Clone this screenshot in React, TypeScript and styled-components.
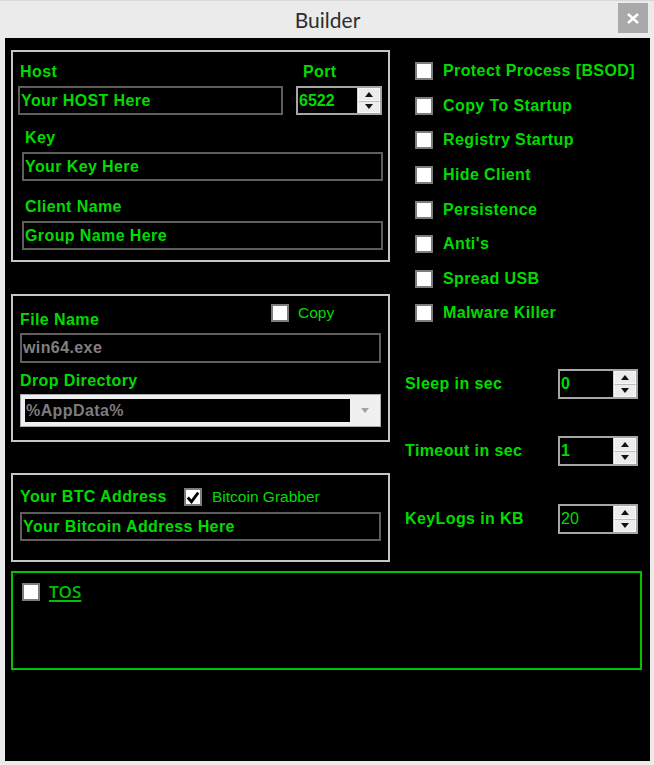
import styled, { createGlobalStyle } from "styled-components";

const GREEN = "#00dc00";
const DARK_GREEN = "#00c300";
const FONT = `"Liberation Sans", Arial, sans-serif`;

const GlobalStyle = createGlobalStyle`
  html, body {
    margin: 0;
    padding: 0;
    background: #ebebeb;
  }
  body {
    width: 654px;
    height: 765px;
    overflow: hidden;
    font-family: ${FONT};
  }
  * {
    box-sizing: border-box;
  }
`;

const optionsList = [
  "Protect Process [BSOD]",
  "Copy To Startup",
  "Registry Startup",
  "Hide Client",
  "Persistence",
  "Anti's",
  "Spread USB",
  "Malware Killer",
];

const numericList = [
  { label: "Sleep in sec", value: "0", bold: true },
  { label: "Timeout in sec", value: "1", bold: true },
  { label: "KeyLogs in KB", value: "20", bold: false },
];

function CheckBox({ checked = false }: { checked?: boolean }) {
  return (
    <St.Box>
      {checked && (
        <svg width="15" height="15" viewBox="0 0 14 14">
          <polyline points="1.8,7 5.5,11.2 12.2,2.2" fill="none" stroke="#000" strokeWidth="2.8" />
        </svg>
      )}
    </St.Box>
  );
}

function Spinner() {
  return (
    <St.Spinner>
      <St.SpinHalf>
        <svg width="8" height="5" viewBox="0 0 8 5">
          <polygon points="0,5 8,5 4,0" fill="#111" />
        </svg>
      </St.SpinHalf>
      <St.SpinHalf $bottom>
        <svg width="8" height="5" viewBox="0 0 8 5">
          <polygon points="0,0 8,0 4,5" fill="#111" />
        </svg>
      </St.SpinHalf>
    </St.Spinner>
  );
}

function NumericBox({ value, width, height, bold = true }: { value: string; width: number; height: number; bold?: boolean }) {
  return (
    <St.Numeric $w={width} $h={height}>
      <St.NumValue $bold={bold}>{value}</St.NumValue>
      <Spinner />
    </St.Numeric>
  );
}

export default function App() {
  return (
    <>
      <GlobalStyle />
      <St.Window>
        <St.TitleBar>
          <span />
          <St.Title>Builder</St.Title>
          <St.CloseBtn type="button" aria-label="close">
            <svg width="12" height="11" viewBox="0 0 12 11">
              <path d="M1 1 L11 10 M11 1 L1 10" stroke="#fff" strokeWidth="2.4" />
            </svg>
          </St.CloseBtn>
        </St.TitleBar>

        <St.Panel>
          <St.LeftCol>
            {/* connection settings */}
            <St.Group $pb={10} $mb={32}>
              <St.HostGrid>
                <St.Label $indent={2}>Host</St.Label>
                <St.Label $indent={7}>Port</St.Label>
                <St.TextBox $h={29} defaultValue="Your HOST Here" readOnly />
                <NumericBox value="6522" width={86} height={29} />
              </St.HostGrid>
              <St.Field $mt={14} $ml={9}>
                <St.Label $indent={3}>Key</St.Label>
                <St.TextBox $h={29} defaultValue="Your Key Here" readOnly />
              </St.Field>
              <St.Field $mt={17} $ml={9}>
                <St.Label $indent={3}>Client Name</St.Label>
                <St.TextBox $h={29} defaultValue="Group Name Here" readOnly />
              </St.Field>
            </St.Group>

            {/* install settings */}
            <St.Group $pb={13} $mb={31}>
              <St.FileHeader>
                <St.Label>File Name</St.Label>
                <St.CheckLine $gap={9}>
                  <CheckBox />
                  <St.Plain>Copy</St.Plain>
                </St.CheckLine>
              </St.FileHeader>
              <St.Field $mt={4} $ml={7}>
                <St.TextBox $h={30} $muted defaultValue="win64.exe" readOnly />
              </St.Field>
              <St.Field $mt={9} $ml={7} $gap={4}>
                <St.Label>Drop Directory</St.Label>
                <St.Combo>
                  <St.ComboText>%AppData%</St.ComboText>
                  <St.ComboArrow>
                    <svg width="8" height="5" viewBox="0 0 8 5">
                      <polygon points="0,0 8,0 4,5" fill="#a3a3a3" />
                    </svg>
                  </St.ComboArrow>
                </St.Combo>
              </St.Field>
            </St.Group>

            {/* btc */}
            <St.Group $pb={19} $mb={0}>
              <St.BtcHeader>
                <St.Label>Your BTC Address</St.Label>
                <St.CheckLine $gap={10}>
                  <CheckBox checked />
                  <St.Plain>Bitcoin Grabber</St.Plain>
                </St.CheckLine>
              </St.BtcHeader>
              <St.Field $mt={5} $ml={7}>
                <St.TextBox $h={29} defaultValue="Your Bitcoin Address Here" readOnly />
              </St.Field>
            </St.Group>
          </St.LeftCol>

          <St.RightCol>
            <St.OptionList>
              {optionsList.map((opt) => (
                <St.OptionRow key={opt}>
                  <CheckBox />
                  <St.Label>{opt}</St.Label>
                </St.OptionRow>
              ))}
            </St.OptionList>
            <St.NumList>
              {numericList.map((n) => (
                <St.NumRow key={n.label}>
                  <St.Label>{n.label}</St.Label>
                  <NumericBox value={n.value} width={80} height={30} bold={n.bold} />
                </St.NumRow>
              ))}
            </St.NumList>
          </St.RightCol>

          <St.TosBox>
            <St.CheckLine $gap={9}>
              <CheckBox />
              <St.TosLink>TOS</St.TosLink>
            </St.CheckLine>
          </St.TosBox>
        </St.Panel>
      </St.Window>
    </>
  );
}

const St = {
  Window: styled.div`
    width: 654px;
    height: 765px;
    background: #ebebeb;
    border-top: 1px solid #d8d8d8;
    padding: 0 4px 4px 5px;
    display: flex;
    flex-direction: column;
  `,
  TitleBar: styled.header`
    height: 37px;
    display: grid;
    grid-template-columns: 1fr auto 1fr;
    align-items: start;
  `,
  Title: styled.span`
    font-family: Lato, "Open Sans", sans-serif;
    font-size: 21px;
    color: #2e2e2e;
    line-height: 37px;
  `,
  CloseBtn: styled.button`
    justify-self: end;
    margin: 2px 2px 0 0;
    width: 30px;
    height: 30px;
    border: none;
    padding: 0;
    background: #a9a9a9;
    display: flex;
    align-items: center;
    justify-content: center;
  `,
  Panel: styled.main`
    flex: 1;
    background: #000;
    padding: 12px 8px 0 6px;
    display: grid;
    grid-template-columns: 379px 1fr;
    align-content: start;
  `,
  LeftCol: styled.section`
    display: flex;
    flex-direction: column;
  `,
  RightCol: styled.section`
    display: flex;
    flex-direction: column;
  `,
  Group: styled.div<{ $pb: number; $mb: number }>`
    border: 2px solid #c6c6c6;
    padding-bottom: ${({ $pb }) => $pb}px;
    margin-bottom: ${({ $mb }) => $mb}px;
    display: flex;
    flex-direction: column;
  `,
  HostGrid: styled.div`
    margin-top: 11px;
    padding-left: 5px;
    display: grid;
    grid-template-columns: 265px 86px;
    column-gap: 13px;
    row-gap: 5px;
  `,
  Field: styled.div<{ $mt: number; $ml: number; $gap?: number }>`
    margin: ${({ $mt }) => $mt}px 0 0 ${({ $ml }) => $ml}px;
    width: 361px;
    display: flex;
    flex-direction: column;
    gap: ${({ $gap }) => $gap ?? 5}px;
  `,
  Label: styled.span<{ $indent?: number }>`
    padding-left: ${({ $indent }) => $indent ?? 0}px;
    font-family: ${FONT};
    font-weight: bold;
    font-size: 16px;
    letter-spacing: 0.4px;
    line-height: 18px;
    color: ${GREEN};
    white-space: nowrap;
  `,
  Plain: styled.span`
    font-family: ${FONT};
    font-size: 15.5px;
    line-height: 18px;
    color: ${GREEN};
    white-space: nowrap;
  `,
  TextBox: styled.input<{ $h: number; $muted?: boolean }>`
    width: 100%;
    height: ${({ $h }) => $h}px;
    border: 2px solid #5e5e5e;
    background: #000;
    padding: 0 1px;
    outline: none;
    font-family: ${FONT};
    font-weight: bold;
    font-size: 16px;
    letter-spacing: 0.4px;
    color: ${({ $muted }) => ($muted ? "#808080" : GREEN)};
  `,
  Numeric: styled.div<{ $w: number; $h: number }>`
    width: ${({ $w }) => $w}px;
    height: ${({ $h }) => $h}px;
    border: 2px solid #a6a6a6;
    background: #000;
    display: flex;
  `,
  NumValue: styled.span<{ $bold: boolean }>`
    flex: 1;
    padding-left: 1px;
    display: flex;
    align-items: center;
    font-family: ${FONT};
    font-size: 16px;
    font-weight: ${({ $bold }) => ($bold ? "bold" : "normal")};
    color: ${GREEN};
  `,
  Spinner: styled.div`
    width: 23px;
    background: #e6e6e6;
    border-left: 1px solid #cfcfcf;
    display: flex;
    flex-direction: column;
  `,
  SpinHalf: styled.div<{ $bottom?: boolean }>`
    flex: 1;
    display: flex;
    align-items: center;
    justify-content: center;
    background: #ececec;
    border: 1px solid #f8f8f8;
    border-top: ${({ $bottom }) => ($bottom ? "1px solid #bdbdbd" : "1px solid #f8f8f8")};
  `,
  Box: styled.span`
    width: 18px;
    height: 18px;
    flex: none;
    background: #fff;
    border: 2px solid #7c7c7c;
    display: flex;
    align-items: center;
    justify-content: center;
  `,
  CheckLine: styled.div<{ $gap: number }>`
    display: flex;
    align-items: center;
    gap: ${({ $gap }) => $gap}px;
  `,
  FileHeader: styled.div`
    margin-top: 8px;
    padding-left: 7px;
    display: grid;
    grid-template-columns: 251px auto;
    height: 25px;
    & > span {
      align-self: end;
    }
    & > div {
      align-self: start;
    }
  `,
  Combo: styled.div`
    height: 33px;
    border: 1px solid #a9a9a9;
    background: #f0f0f0;
    padding: 4px 0 4px 4px;
    display: flex;
  `,
  ComboText: styled.span`
    flex: 1;
    background: #000;
    display: flex;
    align-items: center;
    padding-left: 1px;
    font-family: ${FONT};
    font-weight: bold;
    font-size: 16px;
    letter-spacing: 0.4px;
    color: #7c7c7c;
  `,
  ComboArrow: styled.span`
    width: 30px;
    display: flex;
    align-items: center;
    justify-content: center;
  `,
  BtcHeader: styled.div`
    margin-top: 12px;
    padding-left: 7px;
    height: 20px;
    display: grid;
    grid-template-columns: 164px auto;
    align-items: center;
  `,
  OptionList: styled.div`
    margin-top: 4px;
    padding-left: 25px;
    display: flex;
    flex-direction: column;
  `,
  OptionRow: styled.label`
    height: 34.6px;
    display: flex;
    align-items: center;
    gap: 10px;
  `,
  NumList: styled.div`
    margin-top: 38px;
    padding-left: 15px;
    display: flex;
    flex-direction: column;
    gap: 37.5px;
  `,
  NumRow: styled.div`
    display: grid;
    grid-template-columns: 153px 80px;
    align-items: center;
  `,
  TosBox: styled.div`
    grid-column: 1 / -1;
    margin-top: 9px;
    width: 631px;
    height: 99px;
    border: 2px solid ${DARK_GREEN};
    padding: 10px 0 0 9px;
  `,
  TosLink: styled.span`
    font-family: "Open Sans", sans-serif;
    font-weight: 600;
    font-size: 17px;
    line-height: 18px;
    color: ${DARK_GREEN};
    text-decoration: underline;
    text-underline-offset: 2px;
    text-decoration-thickness: 2px;
  `,
};
